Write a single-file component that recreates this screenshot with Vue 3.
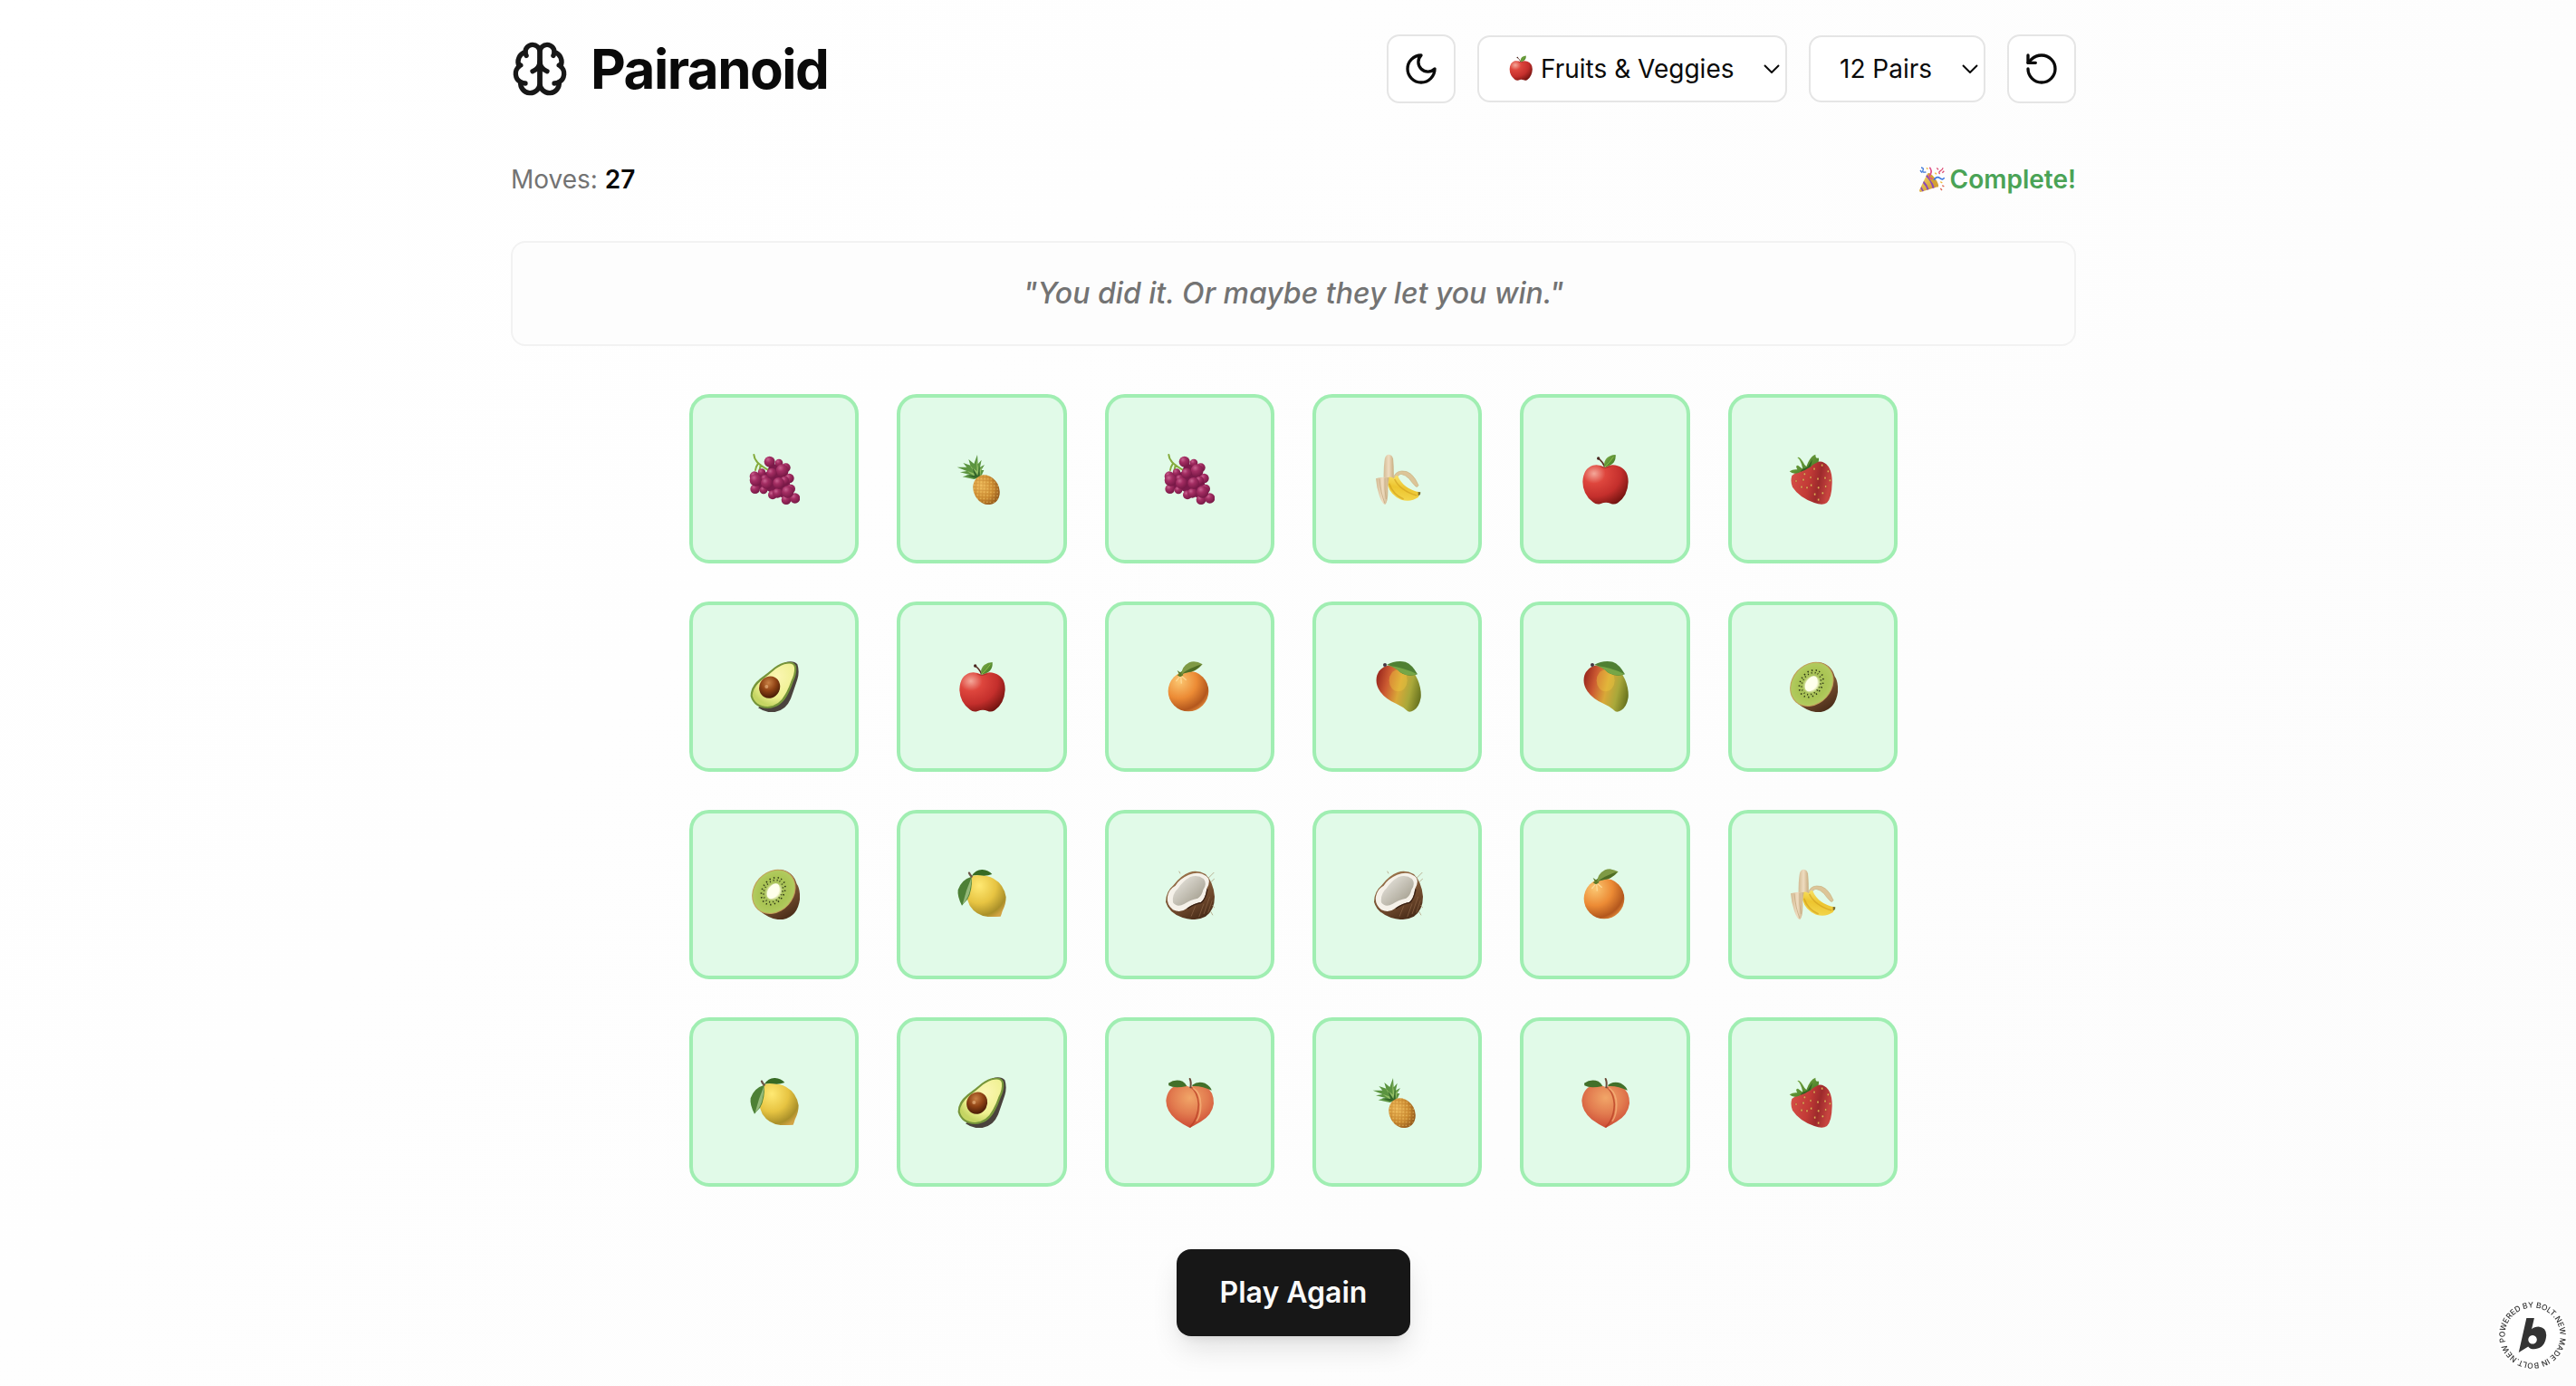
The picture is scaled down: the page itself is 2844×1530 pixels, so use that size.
<template>
  <div class="page">
    <svg class="sprites" width="0" height="0" aria-hidden="true">
      <defs>
        <radialGradient id="g-grape" cx="0.35" cy="0.3" r="0.8">
          <stop offset="0" stop-color="#c9618f" />
          <stop offset="0.35" stop-color="#a32d62" />
          <stop offset="1" stop-color="#6f1440" />
        </radialGradient>
        <radialGradient id="g-pine" cx="0.4" cy="0.3" r="0.8">
          <stop offset="0" stop-color="#eeb95a" />
          <stop offset="0.55" stop-color="#cf8f34" />
          <stop offset="1" stop-color="#7c4413" />
        </radialGradient>
        <pattern id="p-pine" width="11" height="11" patternUnits="userSpaceOnUse" patternTransform="rotate(30)">
          <path d="M0 0H11M0 0V11" stroke="#a8651c" stroke-width="2" opacity="0.5" />
          <circle cx="6" cy="6" r="2" fill="#f6d070" opacity="0.8" />
        </pattern>
        <linearGradient id="g-flesh" x1="0" x2="1">
          <stop offset="0" stop-color="#d3ba93" />
          <stop offset="0.5" stop-color="#efdcc0" />
          <stop offset="1" stop-color="#c8ac80" />
        </linearGradient>
        <linearGradient id="g-banana" x1="0.6" y1="0" x2="0.4" y2="1">
          <stop offset="0" stop-color="#f9e46c" />
          <stop offset="0.5" stop-color="#edc52f" />
          <stop offset="1" stop-color="#f3d64d" />
        </linearGradient>
        <radialGradient id="g-apple" cx="0.25" cy="0.22" r="0.9">
          <stop offset="0" stop-color="#f4a89a" />
          <stop offset="0.28" stop-color="#de463d" />
          <stop offset="0.65" stop-color="#c42f2c" />
          <stop offset="1" stop-color="#70120f" />
        </radialGradient>
        <linearGradient id="g-berry" x1="0" x2="1" y2="0.2">
          <stop offset="0" stop-color="#d9524a" />
          <stop offset="0.5" stop-color="#c23a36" />
          <stop offset="0.75" stop-color="#9d2a2c" />
          <stop offset="1" stop-color="#c8443f" />
        </linearGradient>
        <linearGradient id="g-leaf" x1="0" x2="1" y1="0" y2="1">
          <stop offset="0" stop-color="#85b44c" />
          <stop offset="1" stop-color="#39701f" />
        </linearGradient>
        <radialGradient id="g-avo" cx="0.6" cy="0.3" r="0.7">
          <stop offset="0" stop-color="#fbf6b2" />
          <stop offset="0.7" stop-color="#eef08f" />
          <stop offset="1" stop-color="#c5d563" />
        </radialGradient>
        <radialGradient id="g-pit" cx="0.35" cy="0.35" r="0.7">
          <stop offset="0" stop-color="#c98145" />
          <stop offset="0.5" stop-color="#914415" />
          <stop offset="1" stop-color="#481b06" />
        </radialGradient>
        <radialGradient id="g-orange" cx="0.28" cy="0.25" r="0.85">
          <stop offset="0" stop-color="#fbc772" />
          <stop offset="0.5" stop-color="#ec8b35" />
          <stop offset="0.85" stop-color="#b3571d" />
          <stop offset="1" stop-color="#e38b3c" />
        </radialGradient>
        <linearGradient id="g-mango" x1="0" y1="0.4" x2="1" y2="0.65">
          <stop offset="0" stop-color="#9f2d20" />
          <stop offset="0.22" stop-color="#cc5a31" />
          <stop offset="0.5" stop-color="#d9a838" />
          <stop offset="0.75" stop-color="#a9a83a" />
          <stop offset="1" stop-color="#68731f" />
        </linearGradient>
        <radialGradient id="g-kiwi" cx="0.5" cy="0.5" r="0.5">
          <stop offset="0" stop-color="#ffffee" />
          <stop offset="0.26" stop-color="#fbfcdc" />
          <stop offset="0.42" stop-color="#a9c25a" />
          <stop offset="0.7" stop-color="#aac554" />
          <stop offset="1" stop-color="#b2cb60" />
        </radialGradient>
        <linearGradient id="g-husk" x1="0.4" y1="0" x2="0.9" y2="1">
          <stop offset="0" stop-color="#9c744c" />
          <stop offset="0.6" stop-color="#6d472b" />
          <stop offset="1" stop-color="#3e2413" />
        </linearGradient>
        <radialGradient id="g-lemon" cx="0.32" cy="0.25" r="0.85">
          <stop offset="0" stop-color="#ffe973" />
          <stop offset="0.5" stop-color="#e7c442" />
          <stop offset="0.85" stop-color="#a98f29" />
          <stop offset="1" stop-color="#d2a344" />
        </radialGradient>
        <linearGradient id="g-coco" x1="0.2" y1="0.2" x2="0.8" y2="0.8">
          <stop offset="0" stop-color="#dedbd3" />
          <stop offset="1" stop-color="#aaa596" />
        </linearGradient>
        <radialGradient id="g-peach" cx="0.5" cy="0.3" r="0.75">
          <stop offset="0" stop-color="#f1a668" />
          <stop offset="0.5" stop-color="#e27b4f" />
          <stop offset="1" stop-color="#c94431" />
        </radialGradient>
        <linearGradient id="g-cone" x1="0" y1="0" x2="1" y2="1">
          <stop offset="0" stop-color="#f7da70" />
          <stop offset="1" stop-color="#c78d22" />
        </linearGradient>
      </defs>

      <symbol id="grapes" viewBox="0 0 168 168">
        <path d="M16 3Q17 20 34 34T64 54M30 32Q22 44 21 54M38 38L34 56" fill="none" stroke="#85ab3d" stroke-width="6" stroke-linecap="round" />
        <path d="M20 70L60 60L70 30L124 44L132 84L140 120L150 150L122 150L88 136L50 116L20 116Z" fill="#7b1a4a" />
        <circle v-for="(g, i) in grapes" :key="i" :cx="g[0]" :cy="g[1]" :r="g[2]" fill="url(#g-grape)" />
      </symbol>

      <symbol id="pineapple" viewBox="0 0 168 168">
        <path d="M58 84L20 76L44 69L12 61L34 57L2 44L34 44L22 30L46 38L40 18L58 33L69 3L71 34L83 20L78 44L93 36L82 54L91 54L80 78Z" fill="#5b9440" />
        <path d="M68 80L34 56L62 66L44 38L68 58L66 16L74 58L84 42L78 78Z" fill="#92bd65" />
        <path d="M60 80L30 70L60 72L52 44L70 72L76 40L78 78Z" fill="#34672a" />
        <ellipse cx="99" cy="119" rx="42" ry="51" transform="rotate(-28 99 119)" fill="url(#g-pine)" />
        <ellipse cx="99" cy="119" rx="42" ry="51" transform="rotate(-28 99 119)" fill="url(#p-pine)" />
      </symbol>

      <symbol id="banana" viewBox="0 0 168 168">
        <path d="M38 84Q37 40 42 14Q46 2 55 2Q66 3 69 16Q72 44 71 86Z" fill="url(#g-flesh)" />
        <path d="M69 84Q74 58 98 57Q132 54 153 104Q150 112 144 108Q132 96 122 82Q110 70 96 67Q84 68 78 90Z" fill="#dcc598" stroke="#c9b07f" stroke-width="2" />
        <path d="M52 78Q64 74 72 82Q76 70 84 72Q104 118 158 127Q156 139 152 144Q128 161 96 152Q60 136 52 104Z" fill="url(#g-banana)" />
        <path d="M74 84Q92 122 148 138M56 98Q68 134 104 150" fill="none" stroke="#cf9d1c" stroke-width="5" opacity="0.6" />
        <path d="M152 126L160 127L159 135L152 139Z" fill="#7b6e32" />
        <path d="M12 82Q34 74 56 79Q51 96 52 124Q52 160 43 168Q34 168 24 140Q14 112 12 82Z" fill="url(#g-flesh)" />
        <path d="M24 82Q28 130 42 164M42 80Q40 120 46 150" fill="none" stroke="#bca277" stroke-width="2" />
      </symbol>

      <symbol id="apple" viewBox="0 0 168 168">
        <path d="M84 45Q104 32 126 40Q162 52 161 94Q159 140 126 163Q114 170 102 164Q86 158 70 165Q56 170 44 160Q10 134 10 92Q12 48 44 38Q66 34 84 45Z" fill="url(#g-apple)" />
        <path d="M66 41Q84 54 108 40Q88 47 66 41Z" fill="#7c1a17" opacity="0.6" />
        <path d="M60 14Q76 24 83 43" fill="none" stroke="#5b2f24" stroke-width="5" />
        <circle cx="62" cy="15" r="5" fill="#4a2620" />
        <path d="M82 44Q78 24 92 12Q104 3 119 3Q122 38 82 44Z" fill="url(#g-leaf)" />
        <path d="M84 42Q98 30 112 10" fill="none" stroke="#9bd04d" stroke-width="3" opacity="0.7" />
      </symbol>

      <symbol id="strawberry" viewBox="0 0 168 168">
        <path d="M16 72Q44 50 76 38Q98 22 116 26Q150 38 149 96Q148 146 132 162Q118 172 90 162Q40 144 18 110Q10 92 16 72Z" fill="url(#g-berry)" />
        <path d="M8 58Q20 50 34 52Q26 38 36 38L52 50Q46 20 34 12Q42 6 58 36L64 42Q76 8 94 2Q94 14 100 14Q108 10 104 26Q86 34 76 45Q50 52 40 62Q20 70 8 58Z" fill="url(#g-leaf)" />
        <path d="M52 50L68 44L84 18L78 42Q60 56 42 60Z" fill="#2f6121" />
        <ellipse v-for="(s, i) in seeds" :key="i" :cx="s[0]" :cy="s[1]" rx="3" ry="4" fill="#e5b75c" stroke="#8c2623" />
      </symbol>

      <symbol id="avocado" viewBox="0 0 168 168">
        <path d="M118 4Q148 -4 160 10Q168 34 160 60Q148 96 138 124Q120 168 74 169Q50 168 30 154Q90 120 118 4Z" fill="#4a423d" />
        <path d="M124 3Q150 -2 156 16Q160 40 146 68Q138 92 126 114Q104 154 62 156Q16 154 5 116Q4 84 36 58Q60 40 84 20Q104 5 124 3Z" fill="#76953a" />
        <path d="M126 8Q147 5 150 20Q152 40 140 64Q132 88 120 109Q100 148 62 150Q20 148 11 114Q12 88 40 64Q64 46 88 25Q108 10 126 8Z" fill="url(#g-avo)" />
        <ellipse cx="68" cy="86" rx="34" ry="37" transform="rotate(28 68 86)" fill="url(#g-pit)" />
        <circle cx="58" cy="84" r="6" fill="#f0bd88" opacity="0.6" />
      </symbol>

      <symbol id="orange" viewBox="0 0 168 168">
        <circle cx="81" cy="99" r="67" fill="url(#g-orange)" />
        <path d="M54 50L40 66M56 50L58 74M60 50L74 62" stroke="#ffe0a0" stroke-width="4" opacity="0.8" />
        <path d="M44 30L54 37L60 32L64 46L54 52L44 46L50 42Z" fill="#5c7a2a" />
        <path d="M58 44Q58 18 84 4Q104 -4 128 10Q108 34 80 37Q66 38 58 44Z" fill="#7f9a45" />
        <path d="M60 42Q84 22 126 10Q104 36 78 37Z" fill="#4f6d25" />
      </symbol>

      <symbol id="mango" viewBox="0 0 168 168">
        <path d="M50 14Q100 8 142 44Q164 82 161 120Q156 150 138 162Q126 170 118 166Q104 152 82 142Q44 126 26 100Q8 74 16 46Q26 20 50 14Z" fill="url(#g-mango)" />
        <ellipse cx="86" cy="64" rx="30" ry="36" fill="#efc83f" opacity="0.4" />
        <circle cx="42" cy="12" r="6" fill="#443540" />
        <path d="M48 12Q76 -4 110 2Q132 10 150 43Q120 54 92 36Q74 16 48 12Z" fill="#4f8033" />
        <path d="M52 14Q104 20 148 42Q120 54 92 36Q78 20 52 14Z" fill="#76a647" />
      </symbol>

      <symbol id="kiwi" viewBox="0 0 168 168">
        <path d="M104 2Q146 8 158 50Q170 66 168 102Q160 162 106 169Q70 168 36 140Z" fill="url(#g-husk)" />
        <ellipse cx="82" cy="76" rx="80" ry="66" transform="rotate(-48 82 76)" fill="#c29c58" />
        <ellipse cx="82" cy="76" rx="77" ry="63" transform="rotate(-48 82 76)" fill="url(#g-kiwi)" />
        <g transform="rotate(-58 80 74)">
          <ellipse cx="80" cy="74" rx="48" ry="36" fill="none" stroke="#2c3414" stroke-width="5" stroke-dasharray="4 10" />
          <ellipse cx="80" cy="74" rx="39" ry="29" fill="none" stroke="#2c3414" stroke-width="5" stroke-dasharray="3 9" />
          <ellipse cx="80" cy="74" rx="28" ry="17" fill="#ffffec" />
        </g>
      </symbol>

      <symbol id="lemon" viewBox="0 0 168 168">
        <path d="M50 24Q90 16 122 32Q158 52 164 94Q164 118 152 140Q150 148 146 158Q122 160 104 159Q64 154 44 122Q28 92 36 52Z" fill="url(#g-lemon)" />
        <path d="M50 26Q54 70 36 102Q24 114 18 122Q2 92 5 70Q16 36 50 26Z" fill="#4d8036" />
        <path d="M50 28Q32 70 20 118Q48 94 50 28Z" fill="#94b979" />
        <path d="M50 24Q64 2 86 3Q106 4 118 18Q98 26 78 22Q62 20 50 24Z" fill="#376a24" />
        <path d="M42 14Q44 20 50 26" fill="none" stroke="#6d5548" stroke-width="7" stroke-linecap="round" />
      </symbol>

      <symbol id="coconut" viewBox="0 0 168 168">
        <path d="M84 12Q110 2 138 18Q164 44 168 92Q168 136 138 158Q104 176 62 162Q16 146 6 110Q6 76 32 54Q56 22 84 12Z" fill="url(#g-husk)" />
        <path d="M148 30L166 12M156 44L168 32M154 140L162 154M54 16L50 8M160 120L168 130" stroke="#a78e6b" stroke-width="2" />
        <path d="M82 20Q116 6 140 24Q158 38 142 66Q138 100 124 110Q100 114 78 130Q56 148 30 136Q8 118 12 92Q16 68 38 56Q50 34 82 20Z" fill="#f5f1e9" />
        <path d="M86 28Q112 18 132 34Q144 50 130 70Q126 90 112 98Q88 102 68 116Q44 130 30 112Q26 84 48 64Q64 40 86 28Z" fill="url(#g-coco)" />
        <path d="M144 68Q138 102 124 112Q100 116 78 132" fill="none" stroke="#382013" stroke-width="4" />
        <path d="M152 92L132 150M132 116L116 160M104 124L90 158M160 104L146 146" stroke="#8c6547" stroke-width="3" opacity="0.7" />
      </symbol>

      <symbol id="peach" viewBox="0 0 168 168">
        <path d="M88 34Q112 20 138 30Q166 48 165 88Q160 126 122 148Q98 162 86 168Q62 156 40 140Q8 114 7 78Q12 36 44 28Q70 24 88 34Z" fill="url(#g-peach)" />
        <path d="M88 32Q112 48 115 90Q114 138 86 166" fill="none" stroke="#b83f24" stroke-width="5" opacity="0.75" />
        <path d="M96 36Q122 52 122 92Q122 126 108 146" fill="none" stroke="#f7b57c" stroke-width="5" opacity="0.7" />
        <path d="M15 20Q38 4 62 14Q74 22 76 30Q34 38 16 28Z" fill="#42702a" />
        <path d="M94 26Q112 12 136 20Q156 32 158 44Q126 28 94 30Z" fill="#42702a" />
        <path d="M86 6Q91 16 88 34" fill="none" stroke="#6b4a38" stroke-width="6" stroke-linecap="round" />
      </symbol>

      <symbol id="popper" viewBox="0 0 84 84">
        <path d="M27 22Q50 36 62 66L4 84Q0 84 0 78Z" fill="url(#g-cone)" />
        <path d="M22 32Q38 46 44 72L50 70Q43 43 25 26ZM12 54Q22 64 26 77L32 75Q27 59 15 47ZM4 72L10 82L15 81L7 66Z" fill="#8a4bb6" />
        <ellipse cx="46" cy="44" rx="8" ry="28" transform="rotate(-36 46 44)" fill="#d3a135" />
        <path d="M6 3Q16 4 12 12T22 18M3 12L9 20" fill="none" stroke="#3f78d8" stroke-width="4" />
        <path d="M34 2Q44 14 36 26T44 40" fill="none" stroke="#e0508a" stroke-width="5" />
        <path d="M48 44Q58 30 68 38T83 36" fill="none" stroke="#3f78e0" stroke-width="5" />
        <path d="M58 4L63 10M68 24Q62 18 70 14T78 4M82 14L76 20" fill="none" stroke="#dc4b72" stroke-width="4" />
        <path d="M52 20L57 25M70 50L76 54M24 4L28 8" stroke="#efb93b" stroke-width="4" />
        <path d="M76 62L82 66M70 72L75 78" stroke="#db6a55" stroke-width="4" />
      </symbol>
    </svg>

    <main class="container">
      <header class="header">
        <div class="brand">
          <svg class="brand-icon icon" viewBox="0 0 24 24" aria-hidden="true">
            <path d="M12 5a3 3 0 1 0-5.997.125 4 4 0 0 0-2.526 5.77 4 4 0 0 0 .556 6.588A4 4 0 1 0 12 18Z" />
            <path d="M12 5a3 3 0 1 1 5.997.125 4 4 0 0 1 2.526 5.77 4 4 0 0 1-.556 6.588A4 4 0 1 1 12 18Z" />
            <path d="M15 13a4.5 4.5 0 0 1-3-4 4.5 4.5 0 0 1-3 4" />
            <path d="M17.599 6.5a3 3 0 0 0 .399-1.375" />
            <path d="M6.003 5.125A3 3 0 0 0 6.401 6.5" />
            <path d="M3.477 10.896a4 4 0 0 1 .585-.396" />
            <path d="M19.938 10.5a4 4 0 0 1 .585.396" />
            <path d="M6 18a4 4 0 0 1-1.967-.516" />
            <path d="M19.967 17.484A4 4 0 0 1 18 18" />
          </svg>
          <h1>Pairanoid</h1>
        </div>

        <div class="controls">
          <button class="icon-btn" type="button" aria-label="Toggle theme">
            <svg class="icon" viewBox="0 0 24 24"><path d="M12 3a6 6 0 0 0 9 9 9 9 0 1 1-9-9Z" /></svg>
          </button>
          <div class="select-wrap">
            <svg class="select-emoji" aria-hidden="true"><use href="#apple" /></svg>
            <select v-model="theme" class="with-emoji" aria-label="Theme">
              <option value="fruits">Fruits &amp; Veggies</option>
            </select>
            <svg class="chevron" viewBox="0 0 18 10" aria-hidden="true"><path d="M1 1l8 8 8-8" /></svg>
          </div>
          <div class="select-wrap">
            <select v-model="pairs" aria-label="Number of pairs">
              <option :value="12">12 Pairs</option>
            </select>
            <svg class="chevron" viewBox="0 0 18 10" aria-hidden="true"><path d="M1 1l8 8 8-8" /></svg>
          </div>
          <button class="icon-btn" type="button" aria-label="Restart">
            <svg class="icon" viewBox="0 0 24 24">
              <path d="M3 12a9 9 0 1 0 9-9 9.75 9.75 0 0 0-6.74 2.74L3 8" />
              <path d="M3 3v5h5" />
            </svg>
          </button>
        </div>
      </header>

      <div class="stats">
        <span class="moves">Moves: <strong>{{ moves }}</strong></span>
        <span class="complete">
          <svg class="popper" aria-hidden="true"><use href="#popper" /></svg>
          Complete!
        </span>
      </div>

      <p class="quote">"You did it. Or maybe they let you win."</p>

      <div class="board">
        <button v-for="(card, i) in cards" :key="i" class="card" type="button" :aria-label="card">
          <svg class="fruit" aria-hidden="true"><use :href="'#' + card" /></svg>
        </button>
      </div>

      <button class="play-again" type="button">Play Again</button>
    </main>

    <a class="badge" href="https://bolt.new" aria-label="Powered by Bolt.new">
      <svg viewBox="0 0 84 84">
        <circle cx="42" cy="42" r="41" fill="#fff" />
        <path id="ring" d="M11 50A32 32 0 1 1 73 34A32 32 0 1 1 11 50" fill="none" />
        <text><textPath href="#ring">POWERED BY BOLT.NEW MADE IN BOLT.NEW</textPath></text>
        <path
          fill-rule="evenodd"
          d="M35 22h9l-3 13q3-3 8-3q9 1 9 10q-1 15-14 16q-5 0-7-3l-11 7zM42 42a5 5 0 1 0 .1 0z"
          fill="#333"
        />
      </svg>
    </a>
  </div>
</template>

<script setup>
import { ref } from 'vue'

const theme = ref('fruits')
const pairs = ref(12)
const moves = ref(27)

const cards = [
  'grapes', 'pineapple', 'grapes', 'banana', 'apple', 'strawberry',
  'avocado', 'apple', 'orange', 'mango', 'mango', 'kiwi',
  'kiwi', 'lemon', 'coconut', 'coconut', 'orange', 'banana',
  'lemon', 'avocado', 'peach', 'pineapple', 'peach', 'strawberry'
]

// x, y, radius, back to front
const grapes = [
  [20, 116, 16], [48, 120, 13], [42, 62, 13], [99, 30, 13], [122, 46, 15],
  [18, 74, 16], [78, 136, 15], [94, 130, 16], [133, 81, 16], [118, 88, 14],
  [52, 82, 13], [68, 26, 18], [110, 55, 21], [75, 64, 17], [22, 87, 20],
  [58, 97, 19], [98, 97, 19], [138, 116, 15], [123, 152, 16], [152, 147, 17],
  [128, 126, 20]
]

const seeds = [
  [30, 90], [54, 86], [58, 67], [78, 78], [90, 50], [80, 104], [116, 38],
  [102, 83], [126, 80], [104, 112], [128, 108], [66, 112], [92, 134],
  [118, 130], [136, 58], [104, 152], [142, 88], [48, 110]
]
</script>

<style>
body {
  margin: 0;
}
</style>

<style scoped>
.page {
  min-height: 100vh;
  box-sizing: border-box;
  padding: 38px 32px 54px 44px;
  background: linear-gradient(135deg, #ffffff, #fcfcfc);
  color: #0a0a0a;
  font-family: Inter, "Liberation Sans", sans-serif;
  font-size: 28px;
  line-height: 42px;
}

.sprites {
  position: absolute;
}

.container {
  display: flex;
  flex-direction: column;
  max-width: 1728px;
  margin: 0 auto;
}

.header,
.stats,
.brand,
.controls,
.complete {
  display: flex;
  align-items: center;
}

.header,
.stats {
  justify-content: space-between;
}

.header {
  margin-bottom: 63px;
}

.brand,
.controls {
  gap: 24px;
}

h1 {
  margin: 0;
  font-size: 60px;
  line-height: 76px;
  font-weight: 700;
  letter-spacing: -0.025em;
}

.icon {
  width: 40px;
  height: 40px;
  fill: none;
  stroke: currentColor;
  stroke-width: 2;
  stroke-linecap: round;
  stroke-linejoin: round;
}

.brand-icon {
  width: 64px;
  height: 64px;
  color: #171717;
}

button,
select {
  font: inherit;
  color: inherit;
  cursor: pointer;
}

.icon-btn {
  display: flex;
  align-items: center;
  justify-content: center;
  width: 76px;
  height: 76px;
  padding: 0;
  border: 2px solid #e5e5e5;
  border-radius: 14px;
  background: #fff;
}

.select-wrap {
  position: relative;
  display: flex;
}

select {
  appearance: none;
  height: 74px;
  padding: 0 56px 0 32px;
  border: 2px solid #e5e5e5;
  border-radius: 14px;
  background: #fff;
}

select.with-emoji {
  padding-left: 68px;
}

.select-emoji {
  position: absolute;
  left: 34px;
  top: 22px;
  width: 28px;
  height: 28px;
  pointer-events: none;
}

.chevron {
  position: absolute;
  right: 8px;
  top: 32px;
  width: 18px;
  height: 10px;
  fill: none;
  stroke: #0a0a0a;
  stroke-width: 2;
  pointer-events: none;
}

.stats {
  margin-bottom: 47px;
}

.moves {
  color: #737373;
}

.moves strong {
  color: #0a0a0a;
  font-weight: 600;
}

.complete {
  gap: 6px;
  color: #4aa356;
  font-weight: 600;
}

.popper {
  width: 28px;
  height: 28px;
}

.quote {
  margin: 0 0 53px;
  padding: 34px 40px;
  border: 2px solid #f2f2f2;
  border-radius: 16px;
  background: #fdfdfd;
  color: #737373;
  font-size: 32px;
  line-height: 44px;
  font-style: italic;
  font-weight: 500;
  text-align: center;
}

.board {
  display: grid;
  grid-template-columns: repeat(6, 1fr);
  gap: 42px;
  width: 100%;
  max-width: 1334px;
  margin: 0 auto 69px;
}

.card {
  display: flex;
  align-items: center;
  justify-content: center;
  aspect-ratio: 1;
  padding: 0;
  border: 4px solid #a0eeb2;
  border-radius: 22px;
  background: #e1fae8;
}

.fruit {
  width: 56px;
  height: 56px;
}

.play-again {
  align-self: center;
  height: 96px;
  padding: 0 48px;
  border: 0;
  border-radius: 16px;
  background: #171717;
  box-shadow: 0 16px 32px -4px rgba(0, 0, 0, 0.12), 0 6px 12px -6px rgba(0, 0, 0, 0.1);
  color: #fafafa;
  font-size: 32px;
  font-weight: 600;
}

.badge {
  position: fixed;
  right: 8px;
  bottom: 16px;
  width: 80px;
  height: 80px;
}

.badge svg {
  display: block;
}

.badge text {
  fill: #333;
  font-size: 9px;
  font-weight: 500;
}
</style>
